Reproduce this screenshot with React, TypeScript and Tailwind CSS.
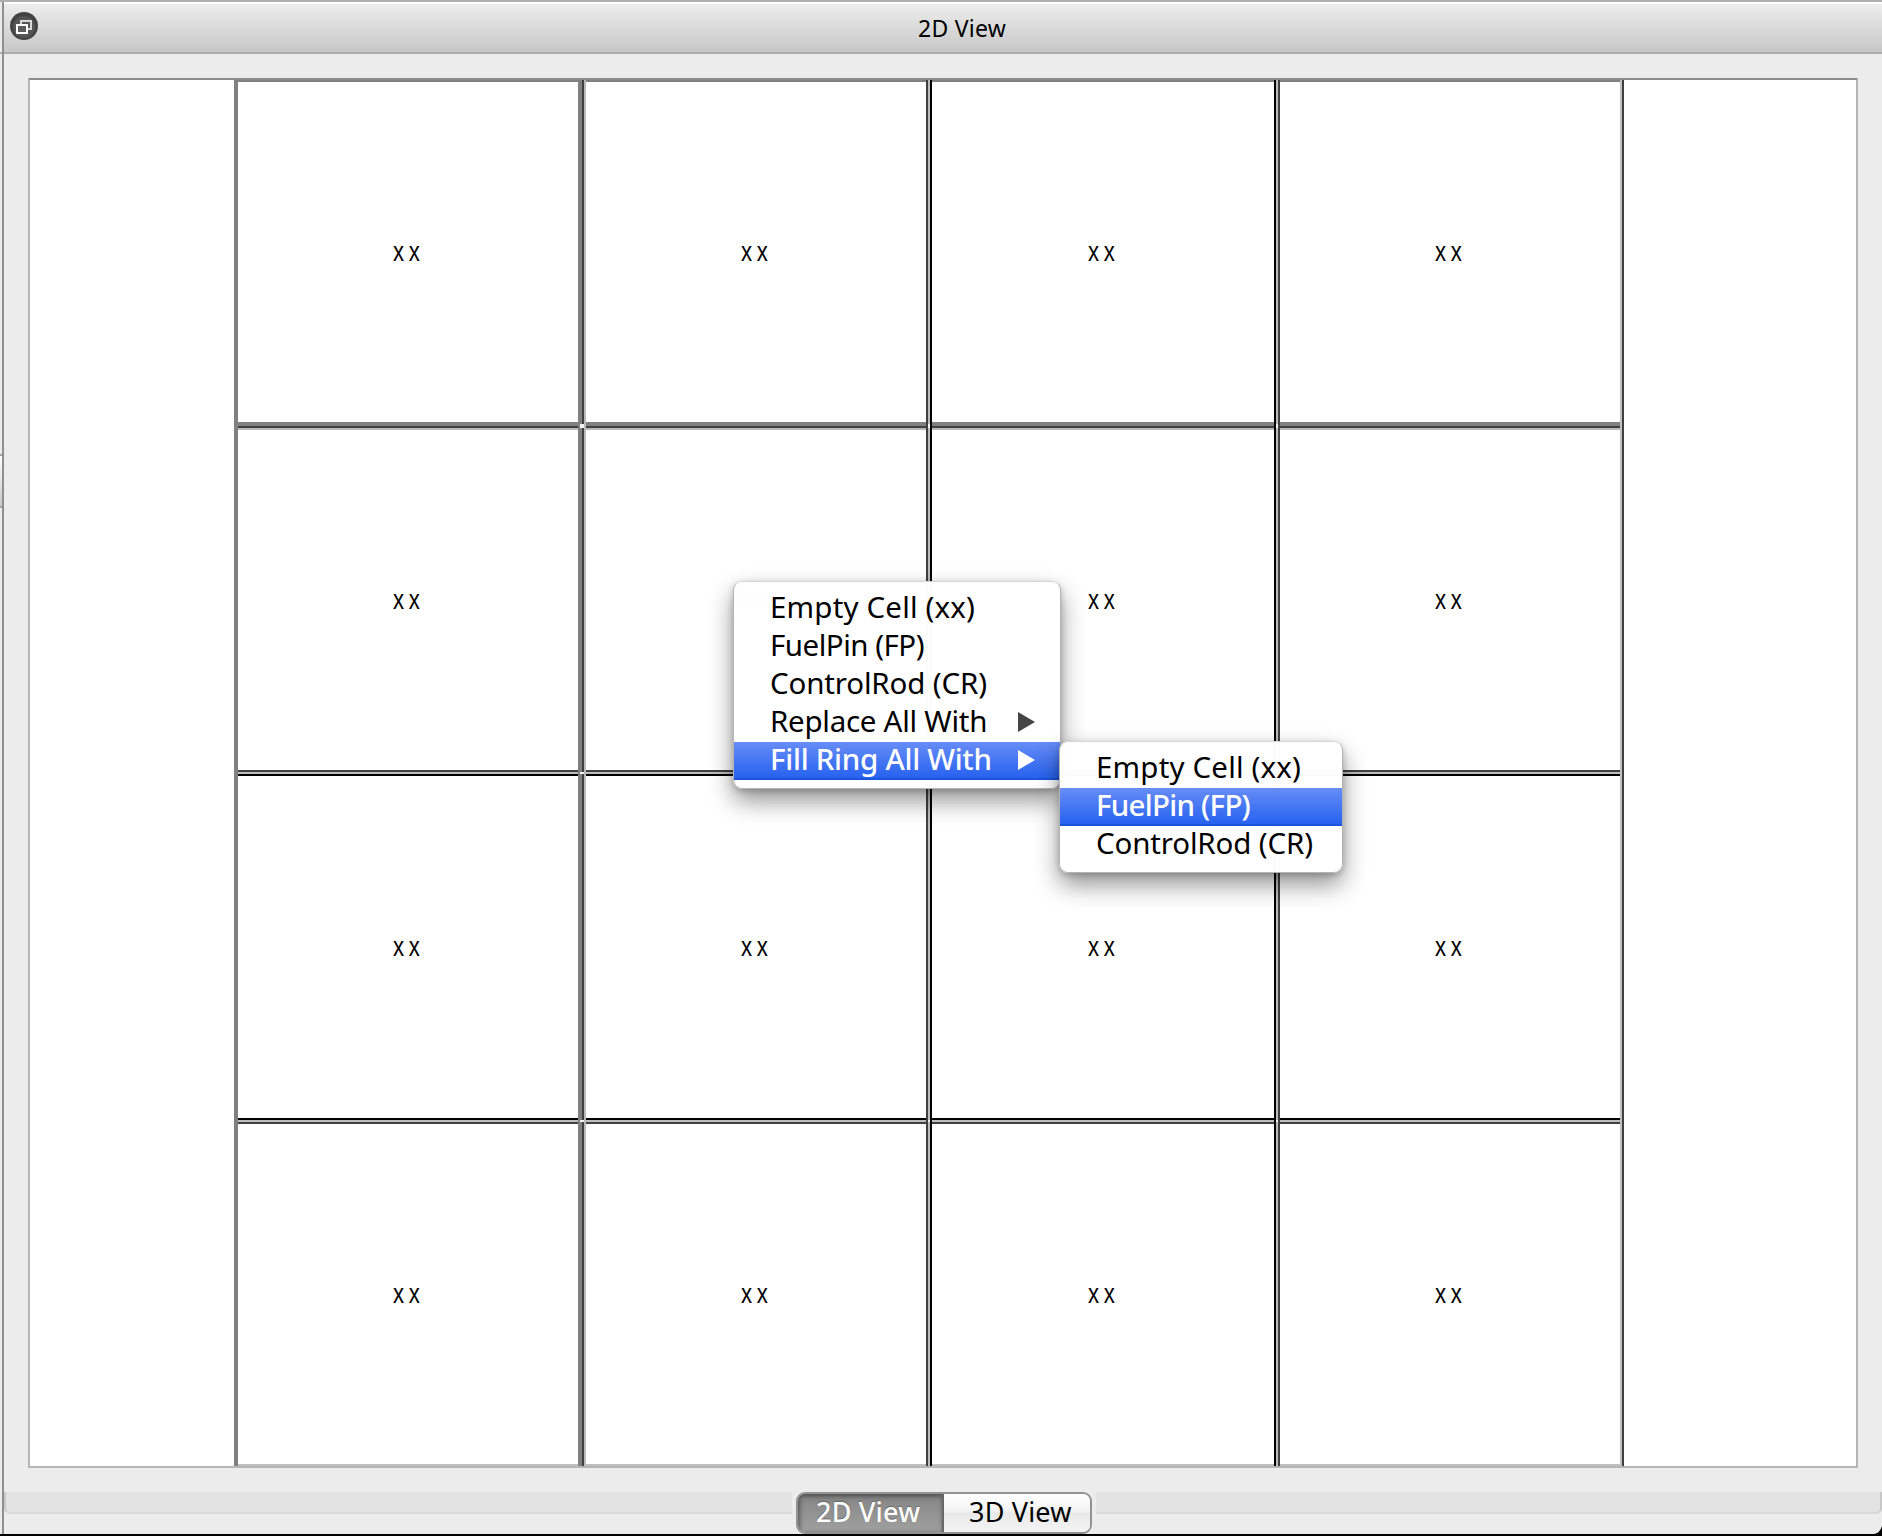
import type { ReactNode } from "react";

const V_LINES = [
  "col-start-1 bg-[#808080]",
  "col-start-3 bg-[linear-gradient(to_right,#808080_4px,#404040_4px_6px,#b9b9b9_6px)]",
  "col-start-5 bg-[linear-gradient(to_right,#404040_2px,#bdbdbd_2px_4px,#000_4px)]",
  "col-start-7 bg-[linear-gradient(to_right,#000_2px,#bdbdbd_2px_4px,#404040_4px)]",
  "col-start-9 bg-[linear-gradient(to_right,#c0c0c0_2px,#404040_2px)]",
];

const H_LINES = [
  "row-start-1 bg-[#808080]",
  "row-start-3 bg-[linear-gradient(to_bottom,#808080_4px,#404040_4px_6px,#b9b9b9_6px)]",
  "row-start-5 bg-[linear-gradient(to_bottom,#404040_2px,#bdbdbd_2px_4px,#000_4px)]",
  "row-start-7 bg-[linear-gradient(to_bottom,#000_2px,#bdbdbd_2px_4px,#404040_4px)]",
  "row-start-9 bg-[#c0c0c0]",
];

const COLS = ["col-start-2", "col-start-4", "col-start-6", "col-start-8"];
const ROWS = ["row-start-2", "row-start-4", "row-start-6", "row-start-8"];
const CROSS_COLS = ["col-start-3 w-[4px]", "col-start-5 w-[2px]", "col-start-7 w-[2px]"];
const CROSS_ROWS = ["row-start-3 h-[4px]", "row-start-5 h-[2px]", "row-start-7 h-[2px]"];

function Lattice() {
  return (
    <div className="ml-[204px] grid w-[1390px] grid-cols-[4px_340px_8px_340px_6px_342px_6px_340px_4px] grid-rows-[2px_340px_8px_340px_6px_342px_6px_340px_2px]">
      {H_LINES.map((c) => (
        <div key={c} className={`col-span-full ${c}`} />
      ))}
      {V_LINES.map((c) => (
        <div key={c} className={`row-start-1 row-end-[10] ${c}`} />
      ))}
      {CROSS_ROWS.map((r) =>
        CROSS_COLS.map((c) => (
          <div key={r + c} className={`${r} ${c} place-self-center bg-[#f2f2f2]`} />
        )),
      )}
      {ROWS.map((r) =>
        COLS.map((c) => (
          <div key={r + c} className={`${r} ${c} flex items-center justify-center`}>
            <span className="mr-[5px] scale-x-[0.82] pl-[7px] font-['Liberation_Sans'] text-[27px] leading-none tracking-[6px] text-black">
              xx
            </span>
          </div>
        )),
      )}
    </div>
  );
}

type MenuItemProps = { label: string; tracking: string; active?: boolean; submenu?: boolean };

function MenuItem({ label, tracking, active, submenu }: MenuItemProps) {
  return (
    <div
      className={`flex h-[38px] items-center justify-between pr-[25px] pl-[36px] ${
        active
          ? "bg-[linear-gradient(to_bottom,#678df6,#2762f0_94%,#1a55dd_95%)] font-medium text-white"
          : "text-black"
      }`}
    >
      <span className={`mt-[-4px] whitespace-nowrap ${tracking}`}>{label}</span>
      {submenu && (
        <svg width="17" height="20" viewBox="0 0 17 20" className={`mt-[-2px] ${active ? "fill-white" : "fill-[#454545]"}`}>
          <path d="M0 0L17 10L0 20Z" />
        </svg>
      )}
    </div>
  );
}

function Menu({ className, children }: { className: string; children: ReactNode }) {
  return (
    <div
      className={`absolute rounded-[9px] border border-[#b4b4b4] border-t-[#d5d5d5] bg-white/[0.985] pt-[8px] text-[29.5px] leading-[38px] shadow-[0_12px_24px_rgba(0,0,0,0.42),0_2px_6px_rgba(0,0,0,0.2)] ${className}`}
    >
      {children}
    </div>
  );
}

function RestoreIcon() {
  return (
    <svg width="28" height="28" viewBox="0 0 28 28" className="mt-[-4px] ml-[6px]">
      <circle cx="14" cy="14" r="14" fill="#424242" />
      <circle cx="14" cy="15" r="11" fill="#555" />
      <path d="M11 12V9H21V17H17" fill="none" stroke="#d8d8d8" strokeWidth="2" />
      <rect x="7" y="13" width="10" height="8" fill="#5c5c5c" stroke="#fff" strokeWidth="2" />
    </svg>
  );
}

export default function App() {
  return (
    <div className="relative flex h-[1536px] w-[1882px] flex-col overflow-hidden border-t-2 border-b-2 border-t-[#afafaf] border-b-black bg-[#ececec] font-['Noto_Sans',sans-serif] text-black">
      <div className="flex min-h-0 flex-1">
        <div className="flex w-[4px] shrink-0 flex-col border-r-2 border-[#8f8f8f]">
          <div className="h-[52px] border-b-2 border-[#adadad]" />
          <div className="mt-[400px] h-[54px] border-y-2 border-[#a5a5a5] bg-[linear-gradient(to_bottom,#fff,#c8c8c8)]" />
        </div>

        <div className="flex min-w-0 flex-1 flex-col">
          <header className="flex h-[52px] items-center border-t-2 border-b-2 border-t-white border-b-[#adadad] bg-[linear-gradient(to_bottom,#ededed,#c7c7c7)]">
            <RestoreIcon />
            <h1 className="ml-[880px] text-[23px] leading-none tracking-[0.25px]">2D View</h1>
          </header>

          <main className="mx-[24px] mt-[24px] h-[1390px] w-[1830px] shrink-0 border-2 border-[#b5b5b5] border-t-[#8c8c8c] bg-white">
            <Lattice />
          </main>

          <footer className="mt-[24px] flex items-start">
            <div className="h-[22px] w-[788px] rounded-bl-md border-b-2 border-l-2 border-b-[#d9d9d9] border-l-[#c8c8c8] bg-[#e3e3e3]" />
            <div className="mx-[4px] flex h-[42px] w-[296px] overflow-hidden rounded-[9px] border-2 border-[#929292] text-[27px] leading-none tracking-[0.2px]">
              <button className="flex w-[146px] items-center border-r-2 border-[#686868] bg-[linear-gradient(to_bottom,#858585,#a0a0a0)] pb-[4px] pl-[18px] font-medium text-white shadow-[inset_0_3px_4px_rgba(0,0,0,0.3),inset_3px_0_4px_rgba(0,0,0,0.2)] [text-shadow:0_-1px_1px_#666]">
                2D View
              </button>
              <button className="flex flex-1 items-center bg-[linear-gradient(to_bottom,#fff,#f3f3f3_45%,#e9e9e9_50%,#f4f4f4)] pb-[4px] pl-[25px]">
                3D View
              </button>
            </div>
            <div className="h-[22px] flex-1 rounded-br-md border-r-2 border-b-2 border-r-[#c8c8c8] border-b-[#d9d9d9] bg-[#e3e3e3]" />
          </footer>
        </div>
      </div>

      <svg width="8" height="8" viewBox="0 0 8 8" className="absolute right-0 bottom-0">
        <path d="M8 0V8H0Q6 7 8 0Z" fill="#000" />
      </svg>

      <Menu className="top-[579px] left-[733px] h-[208px] w-[328px]">
        <MenuItem label="Empty Cell (xx)" tracking="tracking-[0.17px]" />
        <MenuItem label="FuelPin (FP)" tracking="tracking-[-0.5px]" />
        <MenuItem label="ControlRod (CR)" tracking="tracking-[-0.15px]" />
        <MenuItem label="Replace All With" tracking="tracking-[-0.27px]" submenu />
        <MenuItem label="Fill Ring All With" tracking="tracking-[-0.28px]" active submenu />
      </Menu>
      <Menu className="top-[739px] left-[1059px] h-[132px] w-[284px]">
        <MenuItem label="Empty Cell (xx)" tracking="tracking-[0.17px]" />
        <MenuItem label="FuelPin (FP)" tracking="tracking-[-0.75px]" active />
        <MenuItem label="ControlRod (CR)" tracking="tracking-[-0.15px]" />
      </Menu>
    </div>
  );
}
